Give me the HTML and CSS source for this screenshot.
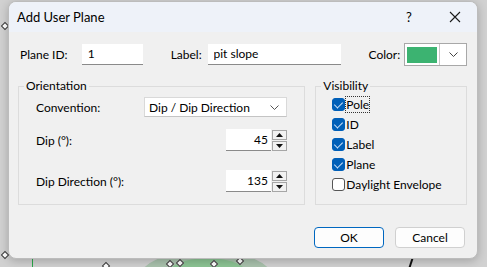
FILE: index.html
```html
<!DOCTYPE html>
<html>
<head>
  <meta charset="utf-8">
  <title>Add User Plane</title>
  <link rel="stylesheet" href="styles.css">
</head>
<body>

<div class="backdrop">
  <div class="blob"></div>
  <div class="blob inner"></div>
  <div class="gridline"></div>
  <div class="stroke"></div>
  <span class="dot" style="left:2px;top:23px"></span>
  <span class="dot" style="left:2px;top:252px"></span>
  <span class="dot" style="left:103px;top:263px"></span>
  <span class="dot" style="left:167px;top:261px"></span>
  <span class="dot" style="left:177px;top:260px"></span>
  <span class="dot" style="left:211px;top:261px"></span>
  <span class="dot" style="left:237px;top:258px"></span>
</div>

<div class="dialog">
  <div class="titlebar">
    <span class="title">Add User Plane</span>
    <span class="help">?</span>
    <span class="close">
      <svg width="12" height="12" viewBox="0 0 12 12"><path d="M1 1L11 11M11 1L1 11" stroke="#1a1a1a" stroke-width="1.1" fill="none"/></svg>
    </span>
  </div>

  <div class="content">
    <div class="toprow">
      <label class="lbl-id">Plane ID:</label>
      <input class="field id-field" value="1">
      <label class="lbl-label">Label:</label>
      <input class="field label-field" value="pit slope">
      <label class="lbl-color">Color:</label>
      <div class="colorpick">
        <div class="swatch"></div>
        <div class="colorarrow">
          <svg width="9" height="5" viewBox="0 0 9 5"><path d="M0.5 0.5L4.5 4.5L8.5 0.5" stroke="#444" fill="none"/></svg>
        </div>
      </div>
    </div>

    <div class="groups">
      <fieldset class="group orient">
        <legend>Orientation</legend>
        <div class="orow first">
          <span class="olabel">Convention:</span>
          <div class="select">
            <span>Dip / Dip Direction</span>
            <svg width="9" height="5" viewBox="0 0 9 5"><path d="M0.5 0.5L4.5 4.5L8.5 0.5" stroke="#555" fill="none"/></svg>
          </div>
        </div>
        <div class="orow spinrow dip">
          <span class="olabel">Dip (°):</span>
          <div class="spin">
            <input class="field num" value="45">
            <div class="arrows">
              <div class="arr"><svg width="7" height="4" viewBox="0 0 7 4"><path d="M3.5 0L7 4H0Z" fill="#111"/></svg></div>
              <div class="arr"><svg width="7" height="4" viewBox="0 0 7 4"><path d="M0 0H7L3.5 4Z" fill="#111"/></svg></div>
            </div>
          </div>
        </div>
        <div class="orow spinrow">
          <span class="olabel">Dip Direction (°):</span>
          <div class="spin">
            <input class="field num" value="135">
            <div class="arrows">
              <div class="arr"><svg width="7" height="4" viewBox="0 0 7 4"><path d="M3.5 0L7 4H0Z" fill="#111"/></svg></div>
              <div class="arr"><svg width="7" height="4" viewBox="0 0 7 4"><path d="M0 0H7L3.5 4Z" fill="#111"/></svg></div>
            </div>
          </div>
        </div>
      </fieldset>

      <fieldset class="group visib">
        <legend>Visibility</legend>
        <div class="check on first"><span class="box"></span><span class="focus">Pole</span></div>
        <div class="check on"><span class="box"></span><span>ID</span></div>
        <div class="check on"><span class="box"></span><span>Label</span></div>
        <div class="check on"><span class="box"></span><span>Plane</span></div>
        <div class="check"><span class="box"></span><span>Daylight Envelope</span></div>
      </fieldset>
    </div>

    <div class="buttons">
      <button class="btn default">OK</button>
      <button class="btn">Cancel</button>
    </div>
  </div>
</div>

</body>
</html>
```

FILE: styles.css
```css
html, body { margin:0; padding:0; }
body { width:487px; height:267px; overflow:hidden; background:#d1d1d1; font-family:Lato, "Noto Sans", sans-serif; font-size:12px; color:#000; position:relative; }

.backdrop { position:absolute; left:0; top:0; width:487px; height:267px; overflow:hidden; }
.blob { position:absolute; left:138px; top:250px; width:136px; height:60px; border-radius:50%; background:#a9c2ad; }
.blob.inner { left:165px; top:258px; width:85px; height:40px; background:#8cc494; }
.gridline { position:absolute; left:32px; top:255px; width:1px; height:12px; background:#2aa84a; }
.stroke { position:absolute; left:410px; top:258px; width:2px; height:10px; background:#111; transform:rotate(18deg); }
.dot { position:absolute; width:4px; height:4px; border:1px solid #333; background:#fff; transform:rotate(45deg); }

.dialog { position:absolute; left:8px; top:1px; width:470px; height:258px; background:#f0f0f0; border:1px solid #bcbcbc; border-radius:8px; box-shadow:0 2px 10px rgba(0,0,0,.22); overflow:hidden; box-sizing:border-box; }

.titlebar { height:30px; background:#eef2f9; display:flex; align-items:center; padding-left:8px; }
.title { font-size:13px; flex:1; }
.help { width:44px; text-align:center; font-size:13px; margin-right:2px; }
.close { width:44px; display:flex; justify-content:center; }

.content { padding:0 10px; }
.toprow { display:flex; align-items:center; height:24px; margin-top:10px; }
.lbl-id { margin-left:1px; width:62px; }
.field { font-family:inherit; font-size:12px; border:none; border-bottom:1px solid #8a8a8a; background:#fff; height:21px; box-sizing:border-box; padding:0 6px; outline:none; }
.id-field { width:61px; }
.lbl-label { margin-left:28px; width:37px; }
.label-field { width:133px; }
.lbl-color { margin-left:28px; width:36px; }
.colorpick { width:63px; height:23px; box-sizing:border-box; border:1px solid #a8a8a8; background:#fff; display:flex; }
.swatch { width:30px; margin:3px 0 2px 2px; background:#3cb371; height:16px; }
.colorarrow { flex:1; display:flex; align-items:center; justify-content:center; border-left:1px solid #c8c8c8; margin-left:2px; }

.groups { display:flex; gap:10px; margin-top:13px; }
.group { margin:0; border:1px solid #dcdcdc; border-radius:0; padding:0; height:126px; box-sizing:border-box; }
.group legend { padding:0 2px; margin-left:5px; line-height:14px; }
.orient { width:288px; margin-left:-1px; }
.visib { width:152px; }

.orow { display:flex; align-items:center; height:22px; margin-left:17px; }
.orow.first { margin-top:3px; }
.olabel { width:108px; }
.spinrow { margin-top:19px; }
.spinrow.dip { margin-top:11px; }
.spinrow .olabel { width:190px; }
.select { width:143px; height:20px; box-sizing:border-box; border:1px solid #d9d9d9; border-bottom-color:#c4c4c4; background:#fff; display:flex; align-items:center; justify-content:space-between; padding:0 7px 0 4px; }
.spin { display:flex; align-items:center; }
.num { width:45px; text-align:right; padding-right:3px; height:22px; }
.arrows { display:flex; flex-direction:column; gap:1px; margin-left:1px; }
.arr { width:13px; height:8px; border:1px solid #a6a6a6; background:#f2f2f2; display:flex; align-items:center; justify-content:center; }

.check { display:flex; align-items:center; height:20px; margin-left:16px; }
.check.first { margin-top:1px; }
.box { width:13px; height:13px; box-sizing:border-box; border:1px solid #555; border-radius:3px; background:#fff; margin-right:1px; position:relative; }
.check.on .box { background:#005fb8; border-color:#005fb8; }
.check.on .box::after { content:""; position:absolute; left:3px; top:1px; width:4px; height:7px; border:solid #cfe2f7; border-width:0 1px 1px 0; transform:rotate(45deg); }
.focus { outline:1px dotted #333; outline-offset:0; }

.buttons { display:flex; justify-content:flex-end; gap:11px; margin-top:22px; padding-right:2px; }
.btn { font-family:inherit; font-size:12px; width:70px; height:21px; background:#fdfdfd; border:1px solid #d0d0d0; border-radius:4px; padding:0; color:#000; }
.btn.default { border-color:#0067c0; }
```
